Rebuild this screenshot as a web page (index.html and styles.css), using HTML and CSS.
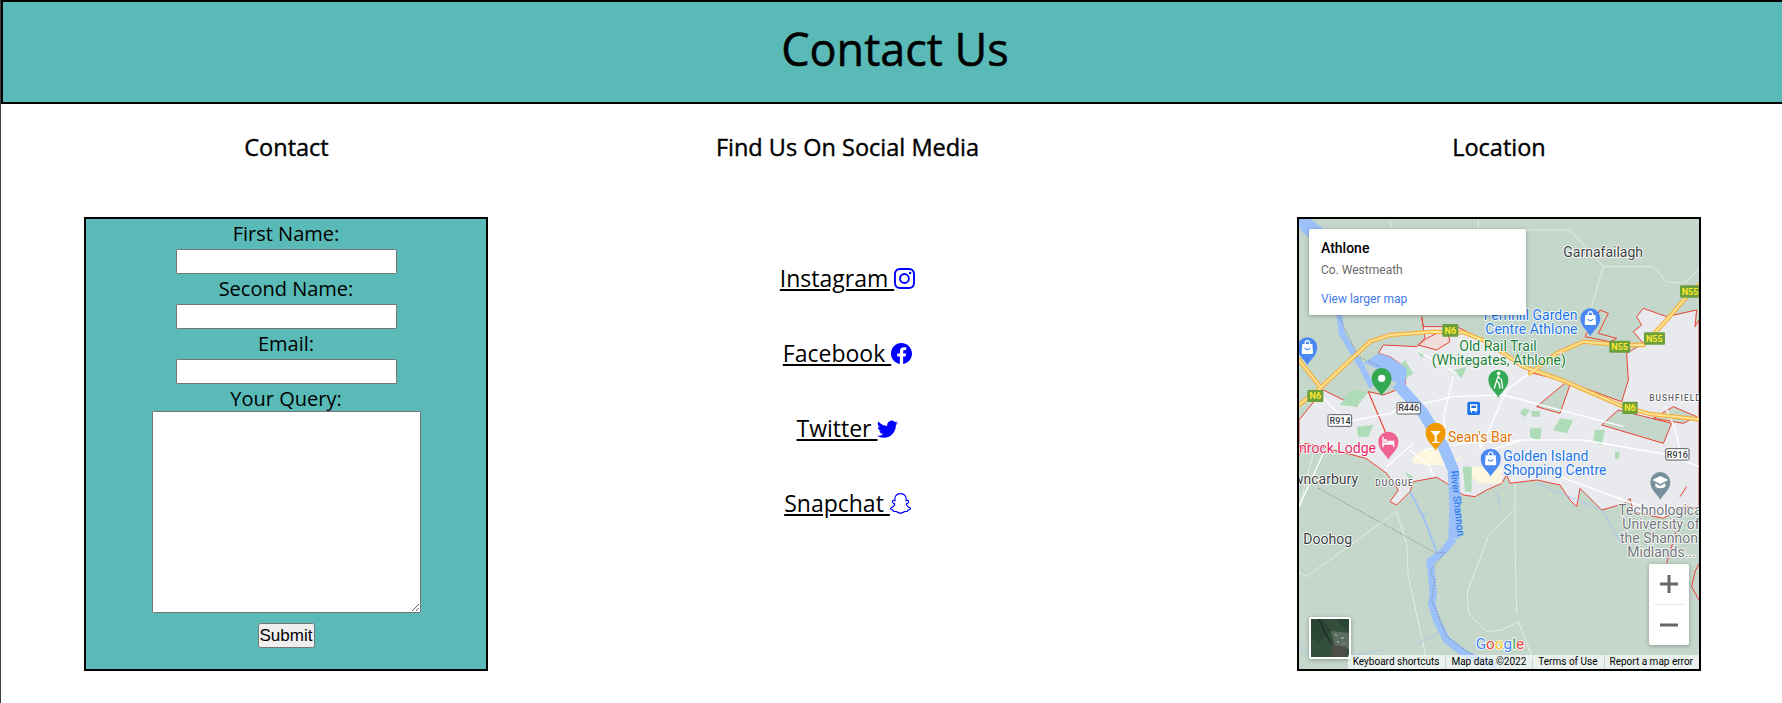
FILE: index.html
```html
<!DOCTYPE html>
<html lang="en">
<head>
  <meta charset="UTF-8" />
  <meta name="viewport" content="width=device-width, initial-scale=1.0"/>
  <title>Contact Us</title>
  <link rel="stylesheet" href="styles.css">
</head>
<body>
  <header class="page-header">
    <h1>Contact Us</h1>
  </header>

  <main class="columns">
    <section class="col-contact">
      <h2>Contact</h2>
      <form class="contact-form">
        <label for="first">First Name:</label>
        <input type="text" id="first" />
        <label for="second">Second Name:</label>
        <input type="text" id="second" />
        <label for="email">Email:</label>
        <input type="text" id="email" />
        <label for="query">Your Query:</label>
        <textarea id="query"></textarea>
        <button type="submit">Submit</button>
      </form>
    </section>

    <section class="col-social">
      <h2>Find Us On Social Media</h2>
      <ul class="social-list">
        <li>
          <a href="#">Instagram </a>
          <svg class="social-icon" viewBox="0 0 16 16"><path d="M8 0C5.829 0 5.556.01 4.703.048 3.85.088 3.269.222 2.76.42a3.917 3.917 0 0 0-1.417.923A3.927 3.927 0 0 0 .42 2.76C.222 3.268.087 3.85.048 4.7.01 5.555 0 5.827 0 8.001c0 2.172.01 2.444.048 3.297.04.852.174 1.433.372 1.942.205.526.478.972.923 1.417.444.445.89.719 1.416.923.51.198 1.09.333 1.942.372C5.555 15.99 5.827 16 8 16s2.444-.01 3.298-.048c.851-.04 1.434-.174 1.943-.372a3.916 3.916 0 0 0 1.416-.923c.445-.445.718-.891.923-1.417.197-.509.332-1.09.372-1.942C15.99 10.445 16 10.173 16 8s-.01-2.445-.048-3.299c-.04-.851-.175-1.433-.372-1.941a3.926 3.926 0 0 0-.923-1.417A3.911 3.911 0 0 0 13.24.42c-.51-.198-1.092-.333-1.943-.372C10.443.01 10.172 0 7.998 0h.003zm-.717 1.442h.718c2.136 0 2.389.007 3.232.046.78.035 1.204.166 1.486.275.373.145.64.319.92.599.28.28.453.546.598.92.11.281.24.705.275 1.485.039.843.047 1.096.047 3.231s-.008 2.389-.047 3.232c-.035.78-.166 1.203-.275 1.485a2.47 2.47 0 0 1-.599.919c-.28.28-.546.453-.92.598-.28.11-.704.24-1.485.276-.843.038-1.096.047-3.232.047s-2.39-.009-3.233-.047c-.78-.036-1.203-.166-1.485-.276a2.478 2.478 0 0 1-.92-.598 2.48 2.48 0 0 1-.6-.92c-.109-.281-.24-.705-.275-1.485-.038-.843-.046-1.096-.046-3.233 0-2.136.008-2.388.046-3.231.036-.78.166-1.204.276-1.486.145-.373.319-.64.599-.92.28-.28.546-.453.92-.598.282-.11.705-.24 1.485-.276.738-.034 1.024-.044 2.515-.045v.002zm4.988 1.328a.96.96 0 1 0 0 1.92.96.96 0 0 0 0-1.92zm-4.27 1.122a4.109 4.109 0 1 0 0 8.217 4.109 4.109 0 0 0 0-8.217zm0 1.441a2.667 2.667 0 1 1 0 5.334 2.667 2.667 0 0 1 0-5.334z"/></svg>
        </li>
        <li>
          <a href="#">Facebook </a>
          <svg class="social-icon" viewBox="0 0 16 16"><path d="M16 8.049c0-4.446-3.582-8.05-8-8.05C3.58 0-.002 3.603-.002 8.05c0 4.017 2.926 7.347 6.75 7.951v-5.625h-2.03V8.05H6.75V6.275c0-2.017 1.195-3.131 3.022-3.131.876 0 1.791.157 1.791.157v1.98h-1.009c-.993 0-1.303.621-1.303 1.258v1.51h2.218l-.354 2.326H9.25V16c3.824-.604 6.75-3.934 6.75-7.951z"/></svg>
        </li>
        <li>
          <a href="#">Twitter </a>
          <svg class="social-icon" viewBox="0 0 16 16"><path d="M5.026 15c6.038 0 9.341-5.003 9.341-9.334 0-.14 0-.282-.006-.422A6.685 6.685 0 0 0 16 3.542a6.658 6.658 0 0 1-1.889.518 3.301 3.301 0 0 0 1.447-1.817 6.533 6.533 0 0 1-2.087.793A3.286 3.286 0 0 0 7.875 6.03a9.325 9.325 0 0 1-6.767-3.429 3.289 3.289 0 0 0 1.018 4.382A3.323 3.323 0 0 1 .64 6.575v.045a3.288 3.288 0 0 0 2.632 3.218 3.203 3.203 0 0 1-.865.115 3.23 3.23 0 0 1-.614-.057 3.283 3.283 0 0 0 3.067 2.277A6.588 6.588 0 0 1 .78 13.58a6.32 6.32 0 0 1-.78-.045A9.344 9.344 0 0 0 5.026 15z"/></svg>
        </li>
        <li>
          <a href="#">Snapchat </a>
          <svg class="social-icon" viewBox="0 0 16 16"><path d="M15.943 11.526c-.111-.303-.323-.465-.564-.599a1.416 1.416 0 0 0-.123-.064l-.219-.111c-.752-.399-1.339-.902-1.746-1.498a3.387 3.387 0 0 1-.3-.531c-.034-.1-.032-.156-.008-.207a.338.338 0 0 1 .097-.1c.129-.086.262-.173.352-.231.162-.104.289-.187.371-.245.309-.216.525-.446.66-.702a1.397 1.397 0 0 0 .069-1.16c-.205-.538-.713-.872-1.329-.872a1.829 1.829 0 0 0-.487.065c.006-.368-.002-.757-.035-1.139-.116-1.344-.587-2.048-1.077-2.61a4.294 4.294 0 0 0-1.095-.881C9.764.216 8.92 0 7.999 0c-.92 0-1.76.216-2.505.641-.412.232-.782.53-1.097.883-.49.562-.96 1.267-1.077 2.61-.033.382-.04.772-.036 1.138a1.83 1.83 0 0 0-.487-.065c-.615 0-1.124.335-1.328.873a1.398 1.398 0 0 0 .067 1.161c.136.256.352.486.66.701.082.058.21.14.371.246l.339.221a.38.38 0 0 1 .109.11c.026.053.027.11-.012.217a3.363 3.363 0 0 1-.295.52c-.398.583-.968 1.077-1.696 1.472-.385.204-.786.34-.955.8-.128.348-.044.743.28 1.075.119.125.257.23.409.31a4.43 4.43 0 0 0 1 .4.66.66 0 0 1 .202.09c.118.104.102.26.259.488.079.118.18.22.296.3.33.229.701.243 1.095.258.355.014.758.03 1.217.18.19.064.389.186.618.328.55.338 1.305.802 2.566.802 1.262 0 2.02-.466 2.576-.806.227-.14.424-.26.609-.321.46-.152.863-.168 1.218-.181.393-.015.764-.03 1.095-.258a1.14 1.14 0 0 0 .336-.368c.114-.192.11-.327.217-.42a.625.625 0 0 1 .19-.087 4.446 4.446 0 0 0 1.014-.404c.16-.087.306-.2.429-.336l.004-.005c.304-.325.38-.709.256-1.047Zm-1.121.602c-.684.378-1.139.337-1.493.565-.3.193-.122.61-.34.76-.269.186-1.061-.012-2.085.326-.845.279-1.384 1.082-2.903 1.082-1.519 0-2.045-.801-2.904-1.084-1.022-.338-1.816-.14-2.084-.325-.218-.15-.041-.568-.341-.761-.354-.228-.809-.187-1.492-.563-.436-.24-.189-.39-.044-.46 2.478-1.199 2.873-3.05 2.89-3.188.022-.166.045-.297-.138-.466-.177-.164-.962-.65-1.18-.802-.36-.252-.52-.503-.402-.812.082-.214.281-.295.49-.295a.93.93 0 0 1 .197.022c.396.086.78.285 1.002.338.027.007.054.01.082.011.118 0 .16-.06.152-.195-.026-.433-.087-1.277-.019-2.066.094-1.084.444-1.622.859-2.097.2-.229 1.137-1.22 2.93-1.22 1.792 0 2.732.987 2.931 1.215.416.475.766 1.013.859 2.098.068.788.009 1.632-.019 2.065-.01.142.034.195.152.195a.35.35 0 0 0 .082-.01c.222-.054.607-.253 1.002-.338a.912.912 0 0 1 .197-.023c.21 0 .409.082.49.295.117.309-.04.56-.401.812-.218.152-1.003.638-1.18.802-.184.169-.16.3-.138.466.017.14.413 1.991 2.89 3.189.147.073.394.222-.041.464Z"/></svg>
        </li>
      </ul>
    </section>

    <section class="col-location">
      <h2>Location</h2>
      <div class="map">
        <!-- map is drawn at 3x, so the numbers line up with a 3x crop of the page -->
        <svg class="map-canvas" viewBox="27 27 1200 1350">
          <defs>
            <path id="pin" d="M0 0C-6-16-30-28-30-54A30 30 0 1 1 30-54C30-28 6-16 0 0Z"/>
            <g id="shop">
              <use href="#pin" fill="#4a89f3"/>
              <path d="M-15-64H15L17-38Q17-34 13-34H-13Q-17-34-17-38Z" fill="#fff"/>
              <path d="M-7-64Q-7-74 0-74Q7-74 7-64" fill="none" stroke="#fff" stroke-width="3.5"/>
              <path d="M-8-52Q0-42 8-52" fill="none" stroke="#4a89f3" stroke-width="3.5"/>
            </g>
          </defs>

          <rect x="27" y="27" width="1200" height="1350" fill="#c4d7ca"/>

          <!-- town area -->
          <path class="area" d="M27 735L45 700 70 705 228 745 290 790 325 840 300 875 320 885 360 845 370 815 440 802 470 820 520 855 555 860 590 840 635 820 650 795 660 820 740 810 810 825 840 870 860 890 870 835 935 900 1005 880 1020 865 1030 905 1120 925 1180 890 1227 895V330L1215 350 1220 300 1130 320 1060 295 1040 320 1055 345 1030 365 1060 400 1010 430 1015 510 995 575 830 515 730 490 700 470 590 395 500 350 400 350 395 320 405 385 380 410 280 405 265 430 300 440 350 475 345 530 280 555 235 545 205 565 200 590 100 540 27 630Z"/>
          <path class="area-green" d="M740 590L800 540 825 520 840 525 810 610Z"/>
          <path class="area-green" d="M935 645L985 600 1145 640 1120 700Z"/>
          <path class="area-green" d="M1090 625L1150 590 1220 620 1180 640Z"/>
          <path class="area-green" d="M885 380L930 300 955 310 925 370 980 385 960 395Z"/>
          <path d="M385 405L410 385 470 355 480 395 440 420Z" fill="#f1dcd9" stroke="#ea4335" stroke-width="3"/>
          <path d="M235 545L290 675" fill="none" stroke="#ea4335" stroke-width="3.5"/>
          <path d="M1227 1060L1215 1085 1205 1130 1227 1170" fill="none" stroke="#ea4335" stroke-width="3"/>
          <path d="M1130 1060L1160 960M1170 860L1190 830" fill="none" stroke="#ea4335" stroke-width="3"/>

          <!-- parks and built up bits -->
          <path class="park" d="M345 450L370 490 335 515 325 470ZM180 540L235 545 200 590 150 585ZM380 420L405 430 395 445ZM530 470L515 505 490 480ZM700 595L720 600 705 622 690 610ZM725 603H750V620H725ZM810 625L850 630 830 670 790 660ZM720 655H755L750 695 720 680ZM915 660H945L935 705 910 695ZM200 650L250 645 235 680 205 680Z"/>
          <path d="M365 745L400 720 440 720 500 745 520 740 480 765 420 765 370 760ZM545 770H635V820H565L545 800Z" fill="#fef7e0"/>
          <path class="park" d="M518 770H545V845H525Z"/>
          <path class="park" d="M345 785L370 800 360 815ZM975 725L990 725 985 750 975 745Z"/>

          <!-- roads -->
          <g class="roads">
            <path d="M27 890L100 730M100 565L170 635 300 610 320 600 490 560 640 555 1000 650M570 660V720L650 540 720 490M490 500L460 620 470 690M380 420L500 490M1125 590Q1160 650 1170 730M1227 770L1140 735 880 690 700 690 520 700 400 720M810 800L1000 870 1110 905M700 690L600 720M290 770L370 700M360 720L420 770 430 800"/>
          </g>
          <g class="minor-roads">
            <path d="M300 27L305 60M565 27V60H730L840 60 940 170 905 290M1227 180L1180 220 1130 215 1090 170 940 170M50 1100L320 905 350 1000 355 1100 410 1350M50 1100L27 1085M670 900L595 980 532 1145 535 1210 590 1265 635 1260 685 1235 730 1350M675 820V1000L680 1210M70 730L30 880"/>
          </g>

          <!-- river -->
          <g class="water">
            <path d="M27 27L60 27 100 55 70 90 40 70 27 50Z"/>
            <path d="M265 430L300 440 350 475 345 530 300 510 250 470 220 460Z"/>
            <path class="river" stroke-width="18" d="M148 315L155 370 215 470 245 530"/>
            <path class="river" stroke-width="34" d="M320 520L400 610 460 710 490 780 495 880 492 985"/>
            <path class="river" stroke-width="22" d="M490 985L460 1025 420 1055 425 1095 430 1150 425 1180 440 1230 470 1290 530 1335 620 1370"/>
            <path class="stream" stroke-width="5" d="M360 845L400 920 440 1025"/>
            <path class="stream" stroke-width="2" d="M390 915L415 910M620 845L632 895M740 820L935 900 1000 1010M27 1310L60 1340 150 1345 270 1320M385 1300L450 1270"/>
          </g>

          <!-- dotted county lines -->
          <g class="dotted">
            <path d="M145 315L205 440 270 470"/>
            <path d="M85 835L440 1030 465 1025 420 1085 435 1110 425 1170 470 1280 560 1345"/>
          </g>

          <!-- motorways -->
          <g fill="none" stroke-linecap="round" stroke-linejoin="round">
            <g stroke="#f2b13f" stroke-width="13">
              <path id="m1" d="M27 585L90 535 170 460 240 395 300 375 430 365 520 367 590 395 700 470 820 512 1000 590 1080 612 1227 628"/>
              <path id="m2" d="M720 490L800 430 880 395 990 405 1060 405 1130 330 1190 260 1227 225"/>
              <path d="M27 450L90 530"/>
            </g>
            <g stroke="#fde293" stroke-width="6">
              <use href="#m1"/>
              <use href="#m2"/>
              <path d="M27 450L90 530"/>
            </g>
          </g>

          <!-- road shields -->
          <g class="shield-n">
            <rect x="457" y="342" width="48" height="38" rx="3"/>
            <rect x="958" y="392" width="62" height="36" rx="3"/>
            <rect x="1062" y="367" width="63" height="37" rx="3"/>
            <rect x="1170" y="226" width="62" height="37" rx="3"/>
            <rect x="52" y="540" width="48" height="36" rx="3"/>
            <rect x="997" y="575" width="46" height="37" rx="3"/>
          </g>
          <g class="shield-n-text">
            <text x="481" y="371">N6</text>
            <text x="989" y="419">N55</text>
            <text x="1093" y="395">N55</text>
            <text x="1200" y="254">N55</text>
            <text x="76" y="568">N6</text>
            <text x="1020" y="604">N6</text>
          </g>
          <g class="shield-r">
            <rect x="321" y="578" width="70" height="34" rx="4"/>
            <rect x="114" y="614" width="71" height="35" rx="4"/>
            <rect x="1127" y="716" width="70" height="34" rx="4"/>
          </g>
          <g class="shield-r-text">
            <text x="356" y="604">R446</text>
            <text x="150" y="641">R914</text>
            <text x="1162" y="743">R916</text>
          </g>

          <!-- pins -->
          <use href="#pin" x="275" y="558" fill="#34a853"/>
          <circle cx="275" cy="505" r="11" fill="#fff"/>
          <use href="#pin" x="625" y="563" fill="#34a853"/>
          <g fill="none" stroke="#fff" stroke-width="4" stroke-linecap="round">
            <circle cx="626" cy="490" r="3.5" fill="#fff"/>
            <path d="M625 498L620 512 627 520 630 534M620 512L613 534M626 502L634 508 638 534"/>
          </g>
          <use href="#shop" x="901" y="379"/>
          <use href="#shop" x="52" y="466"/>
          <use href="#shop" x="602" y="800"/>
          <use href="#pin" x="437" y="722" fill="#f29900"/>
          <path d="M422 663H452L440 677V695H448V699H426V695H434V677Z" fill="#fff"/>
          <use href="#pin" x="295" y="749" fill="#f06292"/>
          <path d="M277 680V712H281V704H309V712H313V692H292V698H281V680ZM283 687H290V697H283Z" fill="#fff"/>
          <use href="#pin" x="1111" y="870" fill="#78909c"/>
          <path d="M1111 798L1135 810 1111 822 1087 810ZM1096 820V830Q1111 840 1126 830V820L1111 828Z" fill="#fff"/>
          <rect x="532" y="575" width="38" height="40" rx="5" fill="#1a73e8"/>
          <path d="M540 583H562V603H559V608H556V603H546V608H543V603H540ZM544 587V594H558V587Z" fill="#fff"/>

          <!-- place names -->
          <g class="labels">
            <text class="lbl-dark" x="820" y="140">Garnafailagh</text>
            <text class="lbl-blue" x="581" y="330">Fernhill Garden</text>
            <text class="lbl-blue" x="586" y="372">Centre Athlone</text>
            <text class="lbl-green" x="508" y="423">Old Rail Trail</text>
            <text class="lbl-green" x="425" y="465">(Whitegates, Athlone)</text>
            <text class="lbl-orange" x="474" y="696">Sean's Bar</text>
            <text class="lbl-pink" x="258" y="729" text-anchor="end">Shamrock Lodge</text>
            <text class="lbl-blue" x="640" y="753">Golden Island</text>
            <text class="lbl-blue" x="640" y="796">Shopping Centre</text>
            <text class="lbl-dark" x="204" y="823" text-anchor="end">Towncarbury</text>
            <text class="lbl-dark" x="40" y="1002">Doohog</text>
            <text class="lbl-small" x="256" y="827">DUOGUE</text>
            <text class="lbl-small" x="1078" y="574">BUSHFIELD</text>
            <text class="lbl-grey" x="985" y="915">Technological</text>
            <text class="lbl-grey" x="997" y="957">University of</text>
            <text class="lbl-grey" x="990" y="999">the Shannon</text>
            <text class="lbl-grey" x="1012" y="1041">Midlands...</text>
            <text class="lbl-river" transform="translate(482 783) rotate(84)">River Shannon</text>
          </g>

          <!-- google mark -->
          <text class="google" x="557" y="1318"><tspan fill="#4285f4">G</tspan><tspan fill="#ea4335">o</tspan><tspan fill="#fbbc05">o</tspan><tspan fill="#4285f4">g</tspan><tspan fill="#34a853">l</tspan><tspan fill="#ea4335">e</tspan></text>
        </svg>

        <div class="map-card">
          <div class="map-card-title">Athlone</div>
          <div class="map-card-sub">Co. Westmeath</div>
          <a class="map-card-link" href="#">View larger map</a>
        </div>

        <div class="map-zoom">
          <div class="map-zoom-btn">
            <svg viewBox="0 0 18 18"><path d="M7.5 0h3v7.5H18v3h-7.5V18h-3v-7.5H0v-3h7.5z"/></svg>
          </div>
          <div class="map-zoom-btn">
            <svg viewBox="0 0 18 18"><path d="M0 7.5h18v3H0z"/></svg>
          </div>
        </div>

        <div class="map-thumb">
          <svg viewBox="0 0 38 38">
            <rect width="38" height="38" fill="#344f3c"/>
            <path d="M0 0H12L20 12 8 24 0 18ZM26 0H38V10L30 8Z" fill="#2a4534"/>
            <path d="M20 12L38 14V30L24 28Z" fill="#5d6d5f"/>
            <path d="M22 26L36 28 34 38H20Z" fill="#4f4d47"/>
            <path d="M8 0L14 14 20 24" fill="none" stroke="#1c2e2c" stroke-width="1.5"/>
            <path d="M24 15h2v2h-2zM30 18h3v2h-3zM26 22h2v2h-2zM32 24h2v1h-2z" fill="#8f988e"/>
          </svg>
        </div>

        <div class="map-footer">
          <span>Keyboard shortcuts</span>
          <span>Map data ©2022</span>
          <span>Terms of Use</span>
          <span>Report a map error</span>
        </div>
      </div>
    </section>
  </main>
</body>
</html>
```

FILE: styles.css
```css
html, body {
  overflow: hidden;
}

body {
  font-family: "Open Sans", Arial, sans-serif;
  margin: 0;
  height: 703px;
  border-left: 1px solid #3c4043;
  color: #000;
  background-color: #fff;
}

.page-header {
  height: 100px;
  margin-right: -3px;
  border: 2px solid #000;
  background-color: #5abab7;
  text-align: center;
}

h1 {
  margin: 0;
  padding-top: 14px;
  padding-left: 4px;
  font-size: 45px;
  font-weight: 400;
  line-height: 65px;
  -webkit-text-stroke: 0.5px #000;
}

h2 {
  margin: 0;
  height: 113px;
  padding-top: 27px;
  box-sizing: border-box;
  font-size: 23.5px;
  font-weight: 400;
  line-height: 33px;
  text-align: center;
  -webkit-text-stroke: 0.4px #000;
}

.columns {
  display: flex;
}

.col-contact {
  width: 571px;
}

.col-social {
  width: 551px;
}

.col-location {
  width: 566px;
  margin-left: auto;
}

/* form */
.contact-form {
  display: flex;
  flex-direction: column;
  align-items: center;
  width: 400px;
  height: 450px;
  margin-left: 83px;
  border: 2px solid #000;
  background-color: #5abab7;
}

.contact-form label {
  padding-top: 1px;
  margin-bottom: -1px;
  font-size: 20px;
  line-height: 27px;
}

.contact-form input {
  width: 221px;
  height: 25px;
  margin: 3px 0 0;
  padding: 1px 2px;
  box-sizing: border-box;
}

.contact-form textarea {
  width: 269px;
  height: 202px;
  margin: 0;
  box-sizing: border-box;
}

.contact-form button {
  width: 57px;
  height: 25px;
  margin-top: 10px;
  padding: 0;
  font-family: "Liberation Sans", Arial, sans-serif;
  font-size: 17px;
}

/* social links */
.social-list {
  display: flex;
  flex-direction: column;
  gap: 42px;
  margin: 0;
  padding: 45px 0 0;
  list-style: none;
}

.social-list li {
  height: 33px;
  font-size: 23px;
  line-height: 33px;
  text-align: center;
}

.social-list a {
  color: #000;
  white-space: pre;
}

.social-icon {
  width: 21px;
  height: 21px;
  margin-left: -6px;
  vertical-align: -2px;
  fill: #0000ff;
}

/* map */
.map {
  position: relative;
  width: 400px;
  height: 450px;
  margin-left: 81px;
  border: 2px solid #000;
  overflow: hidden;
  font-family: Roboto, Arial, sans-serif;
}

.map-canvas {
  display: block;
  width: 400px;
  height: 450px;
}

.area {
  fill: #e8eaed;
  stroke: #ea4335;
  stroke-width: 3;
  stroke-linejoin: round;
}

.area-green {
  fill: #c4d7ca;
  stroke: #ea4335;
  stroke-width: 3;
}

.park {
  fill: #aedcb9;
}

.roads path {
  fill: none;
  stroke: #fff;
  stroke-width: 4;
}

.minor-roads path {
  fill: none;
  stroke: #e6ece6;
  stroke-width: 3;
}

.water > path {
  fill: #9cc0f9;
}

.water > path.river,
.water > path.stream {
  fill: none;
  stroke: #9cc0f9;
  stroke-linejoin: round;
}

.dotted path {
  fill: none;
  stroke: #70757a;
  stroke-width: 2.5;
  stroke-dasharray: 4 5;
}

.shield-n rect {
  fill: #6b9f3c;
}

.shield-n-text text {
  fill: #fde92b;
  font-size: 27px;
  font-weight: 700;
  text-anchor: middle;
}

.shield-r rect {
  fill: #fff;
  stroke: #3c4043;
  stroke-width: 2.5;
}

.shield-r-text text {
  fill: #3c4043;
  font-size: 27px;
  font-weight: 500;
  text-anchor: middle;
}

.labels text {
  font-size: 42px;
  paint-order: stroke;
  stroke: #fff;
  stroke-width: 5;
  stroke-linejoin: round;
}

.lbl-dark { fill: #3c4043; }
.lbl-blue { fill: #1a73e8; }
.lbl-green { fill: #188038; }
.lbl-orange { fill: #e37400; }
.lbl-pink { fill: #e91e63; }
.lbl-grey { fill: #70757a; }

.labels .lbl-small {
  fill: #5f6368;
  font-size: 25px;
  font-weight: 500;
  letter-spacing: 3px;
}

.labels .lbl-river {
  fill: #1a73e8;
  font-size: 31px;
  stroke: #9cc0f9;
  stroke-width: 3;
}

.google {
  font-size: 46px;
  font-weight: 400;
  paint-order: stroke;
  stroke: #fff;
  stroke-width: 5;
}

.map-card {
  position: absolute;
  top: 10px;
  left: 10px;
  width: 217px;
  height: 86px;
  padding: 9px 12px;
  box-sizing: border-box;
  border-radius: 2px;
  background-color: #fff;
  box-shadow: 0 1px 4px rgba(0, 0, 0, 0.3);
}

.map-card-title {
  font-size: 14px;
  font-weight: 500;
  line-height: 20px;
}

.map-card-sub {
  margin-top: 3px;
  color: #6b6b6b;
  font-size: 12px;
  line-height: 18px;
}

.map-card-link {
  display: block;
  margin-top: 11px;
  color: #3f79e8;
  font-size: 12px;
  line-height: 18px;
  text-decoration: none;
}

.map-zoom {
  position: absolute;
  right: 10px;
  bottom: 24px;
  width: 40px;
  height: 81px;
  border-radius: 2px;
  background-color: #fff;
  box-shadow: 0 1px 4px rgba(0, 0, 0, 0.3);
}

.map-zoom-btn {
  display: flex;
  align-items: center;
  justify-content: center;
  height: 40px;
}

.map-zoom-btn + .map-zoom-btn {
  height: 40px;
  margin: 0 5px;
  border-top: 1px solid #e6e6e6;
}

.map-zoom-btn svg {
  width: 18px;
  height: 18px;
  fill: #666;
}

.map-thumb {
  position: absolute;
  left: 10px;
  bottom: 10px;
  width: 38px;
  height: 38px;
  border: 2px solid #fff;
  border-radius: 2px;
  box-shadow: 0 1px 4px rgba(0, 0, 0, 0.3);
}

.map-thumb svg {
  display: block;
  width: 38px;
  height: 38px;
}

.map-footer {
  position: absolute;
  right: 0;
  bottom: 0;
  display: flex;
  gap: 1px;
  height: 14px;
  color: #000;
  font-size: 10px;
  line-height: 14px;
}

.map-footer span {
  padding: 0 6px 0 5px;
  background-color: rgba(255, 255, 255, 0.65);
}
```
